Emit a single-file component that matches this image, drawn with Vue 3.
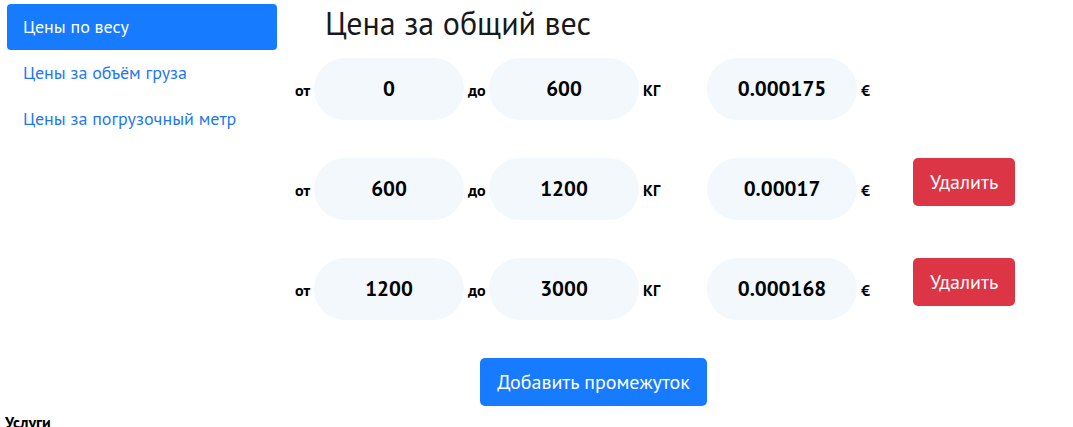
<script setup>
import { ref } from 'vue'

const tabs = ['Цены по весу', 'Цены за объём груза', 'Цены за погрузочный метр']
const active = ref(0)

const ranges = ref([
  { id: 1, from: '0', to: '600', price: '0.000175' },
  { id: 2, from: '600', to: '1200', price: '0.00017' },
  { id: 3, from: '1200', to: '3000', price: '0.000168' },
])

let nextId = 4

function addRange() {
  const last = ranges.value[ranges.value.length - 1]
  ranges.value.push({ id: nextId++, from: last.to, to: '', price: '' })
}

function removeRange(index) {
  ranges.value.splice(index, 1)
}
</script>

<template>
  <main class="page">
    <div class="layout">
      <nav class="tabs">
        <a
          v-for="(tab, i) in tabs"
          :key="tab"
          href="#"
          class="tab"
          :class="{ active: i === active }"
          @click.prevent="active = i"
        >{{ tab }}</a>
      </nav>

      <section class="prices">
        <h1 class="title">Цена за общий вес</h1>

        <div v-for="(range, i) in ranges" :key="range.id" class="range">
          <label :for="`from-${range.id}`">от</label>
          <input :id="`from-${range.id}`" v-model="range.from" type="text">
          <label :for="`to-${range.id}`">до</label>
          <input :id="`to-${range.id}`" v-model="range.to" type="text">
          <label :for="`price-${range.id}`">КГ</label>
          <input :id="`price-${range.id}`" v-model="range.price" type="text">
          <span class="unit">€</span>
          <button v-if="i > 0" type="button" class="btn danger" @click="removeRange(i)">Удалить</button>
        </div>

        <div class="actions">
          <button type="button" class="btn primary" @click="addRange">Добавить промежуток</button>
        </div>
      </section>
    </div>

    <h2 class="services">Услуги</h2>
  </main>
</template>

<style>
body {
  margin: 0;
  background: #fff;
}
</style>

<style scoped>
.page {
  font-family: "PT Sans", "Noto Sans", "Open Sans", sans-serif;
  color: #000;
  padding: 4px 5px 0;
}

.layout {
  display: grid;
  grid-template-columns: 270px minmax(0, 1fr);
  column-gap: 18px;
  padding-left: 2px;
}

.tab {
  display: block;
  padding: 8px 16px;
  border-radius: 4px;
  font-size: 18px;
  line-height: 30px;
  color: #1f78f0;
  text-decoration: none;
}

.tab.active {
  background: #177bff;
  color: #fff;
}

.title {
  margin: 0 0 16px 30px;
  font-size: 32px;
  font-weight: 400;
  line-height: 38px;
  color: #16191c;
}

.range {
  display: grid;
  grid-template-columns: 15px 150px 17px 150px 60px 150px 48px max-content;
  column-gap: 4px;
  align-items: center;
  margin-bottom: 38px;
}

.range label,
.unit {
  padding-top: 1px;
  font-size: 16px;
  font-weight: 700;
  line-height: 20px;
  white-space: nowrap;
}

.range input {
  box-sizing: border-box;
  width: 100%;
  height: 62px;
  padding: 0 16px 2px;
  border: 0;
  border-radius: 31px;
  background: #f2f8fb;
  color: #000;
  font-family: inherit;
  font-size: 21px;
  font-weight: 700;
  text-align: center;
}

.btn {
  padding: 8px 17px;
  border: 0;
  border-radius: 5px;
  color: #fff;
  font-family: inherit;
  font-size: 20px;
  line-height: 32px;
  white-space: nowrap;
  cursor: pointer;
}

.danger {
  align-self: start;
  background: #dc3545;
}

.primary {
  background: #177bff;
}

.actions {
  width: 597px;
  max-width: 100%;
  text-align: center;
}

.services {
  margin: 6px 0 0;
  font-size: 16px;
  font-weight: 700;
  line-height: 20px;
}
</style>
